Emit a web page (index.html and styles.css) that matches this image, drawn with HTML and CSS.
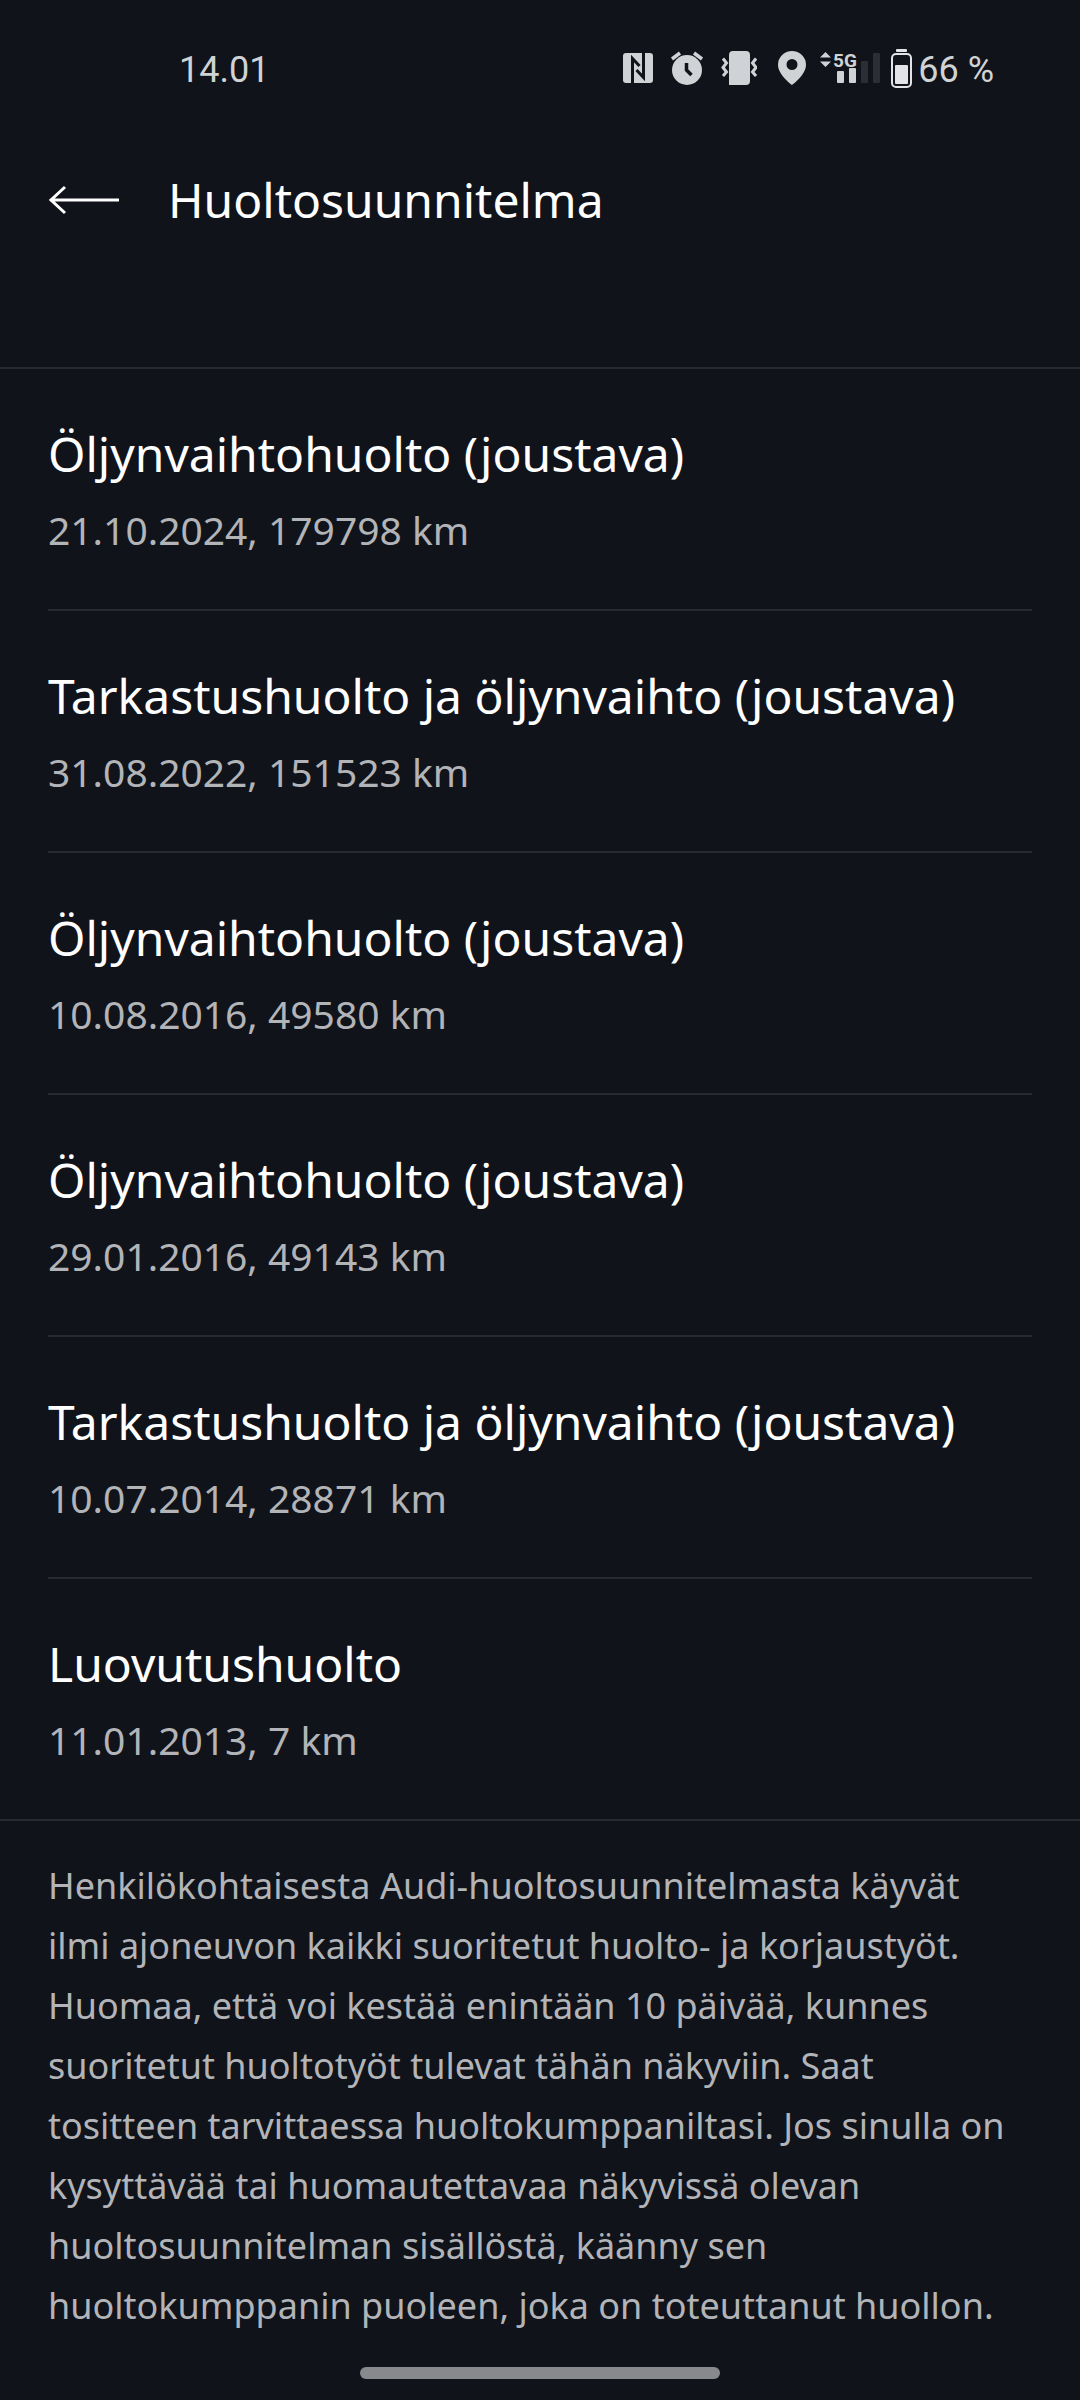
FILE: index.html
```html
<!DOCTYPE html>
<html lang="fi">
<head>
<meta charset="utf-8">
<meta name="viewport" content="width=device-width, initial-scale=1">
<title>Huoltosuunnitelma</title>
<link rel="stylesheet" href="styles.css">
</head>
<body>
<div class="status-bar">
  <span class="status-text">14.01</span>
  <div class="status-right">
    <div class="status-icons">
      <!-- NFC -->
      <svg width="36" height="40" viewBox="0 0 36 40">
        <rect x="6" y="4" width="30" height="30" rx="3" fill="#d0d3d5"/>
        <path d="M15.500 34V9.500L22.500 17M26.500 4V28.500L19.500 21" fill="none" stroke="#10131a" stroke-width="3"/>
      </svg>
      <!-- alarm -->
      <svg width="36" height="40" viewBox="0 0 36 40">
        <circle cx="18" cy="21" r="15" fill="#d0d3d5"/>
        <path d="M3 10l8-6M33 10l-8-6" stroke="#d0d3d5" stroke-width="3.500"/>
        <path d="M17.500 14v7l5 5" fill="none" stroke="#10131a" stroke-width="3.500"/>
      </svg>
      <!-- vibrate -->
      <svg width="36" height="40" viewBox="0 0 36 40">
        <path d="M12 2h13a4 4 0 0 1 4 4v26a4 4 0 0 1-4 4H8V6a4 4 0 0 1 4-4z" fill="#d0d3d5"/>
        <path d="M2 9.500l3.500 4.500-3.500 4.500 3.500 4.500-3.500 4M35 9.500l-3.500 4.500 3.500 4.500-3.500 4.500 3.500 4" fill="none" stroke="#d0d3d5" stroke-width="3"/>
      </svg>
      <!-- location -->
      <svg width="36" height="40" viewBox="0 0 36 40">
        <path fill="#d0d3d5" fill-rule="evenodd" d="M19 2a14 14 0 0 0-14 14c0 10 14 20 14 20s14-10 14-20A14 14 0 0 0 19 2zm0 8a5.500 5.500 0 1 1 0 11 5.500 5.500 0 0 1 0-11z"/>
      </svg>
    </div>
    <!-- mobile network -->
    <svg width="62" height="40" viewBox="0 0 62 40">
      <path d="M1 8.500L6.500 3l5.500 5.500zM1 12.500h11L6.500 18z" fill="#d0d3d5"/>
      <text class="network" x="14" y="18">5G</text>
      <rect x="18" y="22" width="7" height="12" rx="1" fill="#d0d3d5"/>
      <rect x="30" y="19" width="7" height="15" rx="1" fill="#d0d3d5"/>
      <rect x="42" y="12" width="7" height="22" rx="1" fill="#2b2e35"/>
      <rect x="54" y="4" width="7" height="30" rx="1" fill="#2b2e35"/>
    </svg>
    <div class="battery">
      <svg width="22" height="40" viewBox="0 0 22 40">
        <rect x="5" y="0" width="11" height="3" rx="1" fill="#e2e3e6"/>
        <rect x="1" y="5" width="19" height="33" rx="4" fill="none" stroke="#e2e3e6" stroke-width="2"/>
        <rect x="4" y="16" width="13" height="19" rx="1" fill="#e2e3e6"/>
      </svg>
      <span class="status-text">66 %</span>
    </div>
  </div>
</div>

<header class="top-bar">
  <button class="back" type="button" aria-label="Takaisin">
    <svg width="72" height="32" viewBox="0 0 72 32">
      <path d="M2 16h69M17 3L3 16l14 13" fill="none" stroke="#fff" stroke-width="3"/>
    </svg>
  </button>
  <h1>Huoltosuunnitelma</h1>
</header>

<main>
  <ul class="services">
    <li>
      <h2>Öljynvaihtohuolto (joustava)</h2>
      <p>21.10.2024, 179798 km</p>
    </li>
    <li>
      <h2>Tarkastushuolto ja öljynvaihto (joustava)</h2>
      <p>31.08.2022, 151523 km</p>
    </li>
    <li>
      <h2>Öljynvaihtohuolto (joustava)</h2>
      <p>10.08.2016, 49580 km</p>
    </li>
    <li>
      <h2>Öljynvaihtohuolto (joustava)</h2>
      <p>29.01.2016, 49143 km</p>
    </li>
    <li>
      <h2>Tarkastushuolto ja öljynvaihto (joustava)</h2>
      <p>10.07.2014, 28871 km</p>
    </li>
    <li>
      <h2>Luovutushuolto</h2>
      <p>11.01.2013, 7 km</p>
    </li>
  </ul>
  <p class="note">Henkilökohtaisesta Audi-huoltosuunnitelmasta käyvät
    ilmi ajoneuvon kaikki suoritetut huolto- ja korjaustyöt.
    Huomaa, että voi kestää enintään 10 päivää, kunnes
    suoritetut huoltotyöt tulevat tähän näkyviin. Saat
    tositteen tarvittaessa huoltokumppaniltasi. Jos sinulla on
    kysyttävää tai huomautettavaa näkyvissä olevan
    huoltosuunnitelman sisällöstä, käänny sen
    huoltokumppanin puoleen, joka on toteuttanut huollon.</p>
</main>
<div class="home-bar"></div>
</body>
</html>
```
FILE: styles.css
```css
* {
  box-sizing: border-box;
}
body {
  margin: 0;
  background: #10131a;
  color: #fff;
  font-family: "Noto Sans", sans-serif;
}
h1, h2, p, ul {
  margin: 0;
  padding: 0;
  font-weight: 400;
}
svg {
  display: block;
}

/* Phone status bar */
.status-bar {
  display: flex;
  align-items: center;
  justify-content: space-between;
  height: 138px;
  padding: 0 86px 0 179px;
  color: #d0d3d5;
  font-family: Roboto, sans-serif;
  font-size: 36px;
}
.status-text {
  padding-top: 2px;
}
.status-right {
  display: flex;
  align-items: center;
  gap: 10px;
}
.status-icons {
  display: flex;
  gap: 16px;
}
.battery {
  display: flex;
  align-items: center;
  gap: 5px;
}
.network {
  fill: #d0d3d5;
  font-size: 19px;
  font-weight: 700;
}

/* Back arrow and page title */
.top-bar {
  display: flex;
  align-items: center;
  gap: 48px;
  padding: 30px 48px 135px;
  border-bottom: 2px solid #272a31;
}
.back {
  padding: 0;
  border: 0;
  background: none;
  cursor: pointer;
}
h1, h2 {
  font-size: 48px;
  line-height: 64px;
}

/* Service history */
.services {
  list-style: none;
  border-bottom: 2px solid #272a31;
}
.services li {
  margin: 0 48px;
  padding: 53px 0 55px;
}
.services li + li {
  border-top: 2px solid #272a31;
}
.services p {
  margin-top: 20px;
  color: #b2b4b8;
  font-size: 39px;
  line-height: 48px;
}
.note {
  padding: 35px 56px 31px 48px;
  color: #b2b4b8;
  font-size: 36px;
  line-height: 60px;
}

/* Gesture handle */
.home-bar {
  width: 360px;
  height: 12px;
  margin: 0 auto 21px;
  border-radius: 6px;
  background: #87898c;
}
```
